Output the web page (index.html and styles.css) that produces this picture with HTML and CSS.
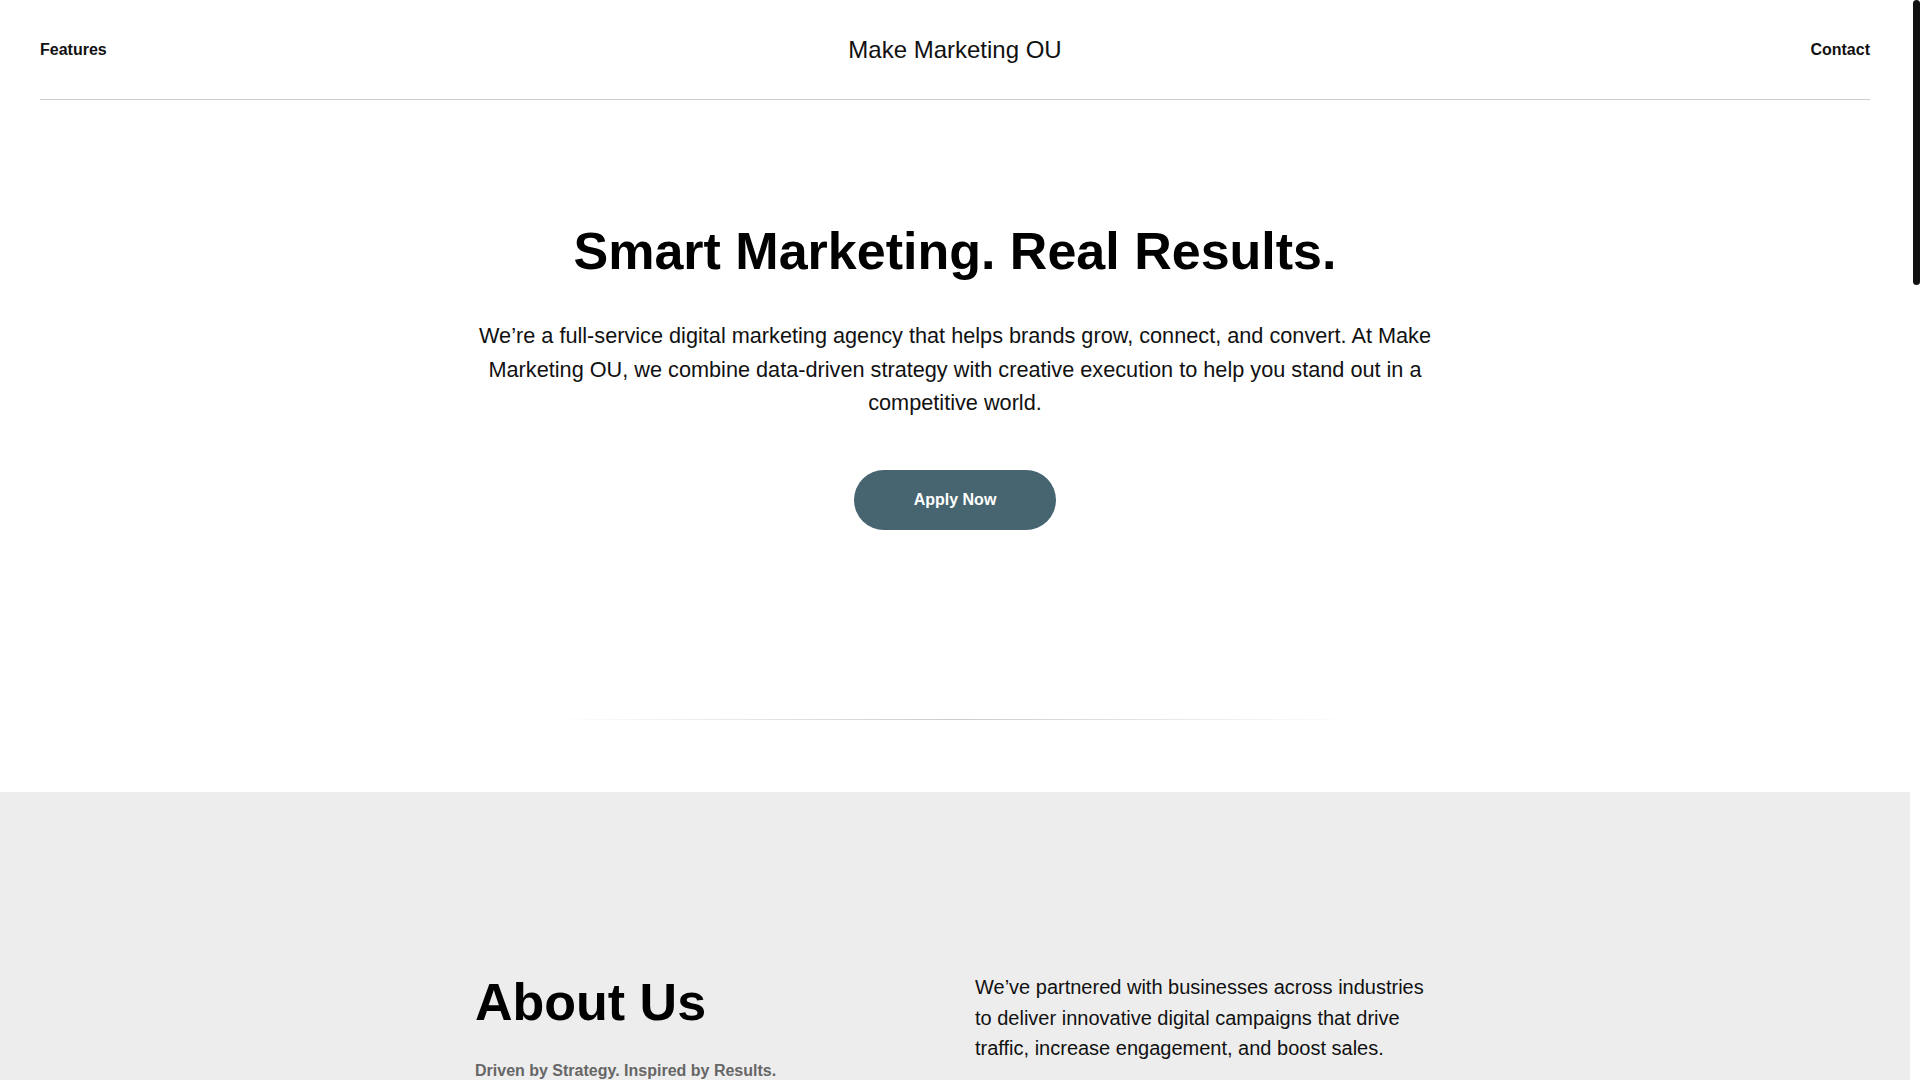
FILE: index.html
```html
<!DOCTYPE html>
<html lang="en">
<head>
<meta charset="utf-8">
<title>Make Marketing OU</title>
<link rel="stylesheet" href="styles.css">
</head>
<body>
<div class="frame">
<div class="page">
<header class="site-header">
  <a class="nav-link nav-left" href="#features">Features</a>
  <a class="brand" href="#">Make Marketing OU</a>
  <a class="nav-link nav-right" href="#contact">Contact</a>
</header>

<main>
  <section class="hero">
    <h1 class="hero-title">Smart Marketing. Real Results.</h1>
    <p class="hero-text">We’re a full-service digital marketing agency that helps brands grow, connect, and convert. At Make Marketing OU, we combine data-driven strategy with creative execution to help you stand out in a competitive world.</p>
    <a class="btn" href="#contact">Apply Now</a>
    <div class="divider"></div>
  </section>

  <section class="about">
    <div class="about-inner">
      <div class="about-left">
        <h2 class="about-title">About Us</h2>
        <p class="about-sub">Driven by Strategy. Inspired by Results.</p>
      </div>
      <div class="about-right">
        <p>We’ve partnered with businesses across industries to deliver innovative digital campaigns that drive traffic, increase engagement, and boost sales.</p>
        <p>From social media and SEO to content and paid advertising, our team builds marketing that works — measurable, scalable and tailored to your goals.</p>
      </div>
    </div>
  </section>

  <section class="features" id="features">
    <h2 class="section-title">Features</h2>
    <div class="feature-grid">
      <div class="feature"><h3>SEO &amp; Content</h3><p>Rank higher and attract the right audience with content built on research.</p></div>
      <div class="feature"><h3>Social Media</h3><p>Grow a loyal community with campaigns crafted for every platform.</p></div>
      <div class="feature"><h3>Paid Advertising</h3><p>Turn budget into results with targeted, continuously optimised ads.</p></div>
      <div class="feature"><h3>Analytics</h3><p>Clear reporting that shows exactly what works and why.</p></div>
    </div>
  </section>

  <section class="testimonials">
    <h2 class="section-title">What Clients Say</h2>
    <blockquote class="quote">“Make Marketing OU doubled our qualified leads in six months. Their team feels like an extension of ours.”</blockquote>
    <p class="quote-author">— Growth Lead, E-commerce Brand</p>
  </section>

  <section class="contact" id="contact">
    <h2 class="section-title">Contact</h2>
    <p class="contact-text">Ready to grow? Get in touch and let’s build your next campaign together.</p>
    <a class="btn" href="#">Apply Now</a>
  </section>
</main>

<footer class="site-footer">© Make Marketing OU. All rights reserved.</footer>
</div>
<div class="rail" aria-hidden="true"><div class="thumb"></div></div>
</div>
</body>
</html>
```

FILE: styles.css
```css
html {
  background: #fff;
}
body {
  margin: 0;
  font-family: "Liberation Sans", Arial, sans-serif;
  color: #000;
  background: #fff;
}
a {
  color: inherit;
  text-decoration: none;
}
.frame {
  display: flex;
  align-items: flex-start;
}
.page {
  flex: 1;
  min-width: 0;
}
.rail {
  flex: 0 0 10px;
  width: 10px;
  background: #fff;
  display: flex;
  justify-content: flex-end;
}
.thumb {
  width: 7px;
  height: 285px;
  background: #111;
  border-radius: 4px;
}
.site-header {
  margin: 0 40px;
  height: 99px;
  border-bottom: 1px solid #cccccc;
  display: grid;
  grid-template-columns: 1fr auto 1fr;
  align-items: center;
}
.nav-link {
  font-size: 16px;
  font-weight: 700;
  color: #111;
  line-height: 18px;
}
.nav-left {
  justify-self: start;
}
.nav-right {
  justify-self: end;
}
.brand {
  font-size: 24px;
  color: #111;
  line-height: 28px;
}
.hero {
  padding-top: 121px;
  display: flex;
  flex-direction: column;
  align-items: center;
  text-align: center;
}
.hero-title {
  margin: 0;
  font-size: 52px;
  line-height: 60px;
  font-weight: 700;
}
.hero-text {
  margin: 38px 0 0;
  max-width: 960px;
  font-size: 21.7px;
  line-height: 33.7px;
  color: #111;
}
.btn {
  margin-top: 50px;
  height: 60px;
  padding: 0 60px;
  display: inline-flex;
  align-items: center;
  justify-content: center;
  background: #466570;
  color: #fff;
  font-size: 16px;
  font-weight: 700;
  border-radius: 30px;
}
.divider {
  margin-top: 189px;
  margin-bottom: 72px;
  width: 800px;
  height: 1px;
  background: linear-gradient(to right, rgba(204,204,204,0), #cccccc 50%, rgba(204,204,204,0));
}
.about {
  background: #ededed;
  padding: 180px 0 200px;
}
.about-inner {
  max-width: 960px;
  margin: 0 auto;
  display: grid;
  grid-template-columns: 1fr 1fr;
  gap: 40px;
}
.about-title {
  margin: 0;
  font-size: 52px;
  line-height: 60px;
  font-weight: 700;
}
.about-sub {
  margin: 27px 0 0;
  font-size: 16px;
  line-height: 24px;
  font-weight: 700;
  color: #666;
}
.about-right p {
  margin: 0 0 20px;
  font-size: 20px;
  line-height: 30.6px;
  color: #111;
}
.features {
  padding: 160px 40px;
  max-width: 1200px;
  margin: 0 auto;
  text-align: center;
}
.section-title {
  margin: 0 0 60px;
  font-size: 52px;
  line-height: 60px;
}
.feature-grid {
  display: grid;
  grid-template-columns: repeat(2, 1fr);
  gap: 40px;
  text-align: left;
}
.feature {
  padding: 60px 40px;
  min-height: 240px;
  border: 1px solid #ddd;
  border-radius: 12px;
}
.feature h3 {
  margin: 0 0 16px;
  font-size: 24px;
}
.feature p {
  margin: 0;
  font-size: 18px;
  line-height: 28px;
  color: #444;
}
.testimonials {
  padding: 200px 40px 260px;
  max-width: 960px;
  margin: 0 auto;
  text-align: center;
}
.quote {
  margin: 0;
  font-size: 28px;
  line-height: 44px;
  color: #111;
}
.quote-author {
  margin: 30px 0 0;
  font-size: 16px;
  font-weight: 700;
  color: #666;
}
.contact {
  background: #ededed;
  padding: 200px 40px;
  display: flex;
  flex-direction: column;
  align-items: center;
  text-align: center;
}
.contact-text {
  margin: 0;
  font-size: 20px;
  line-height: 30px;
  color: #111;
}
.site-footer {
  padding: 80px 40px;
  text-align: center;
  font-size: 14px;
  color: #666;
}
```
